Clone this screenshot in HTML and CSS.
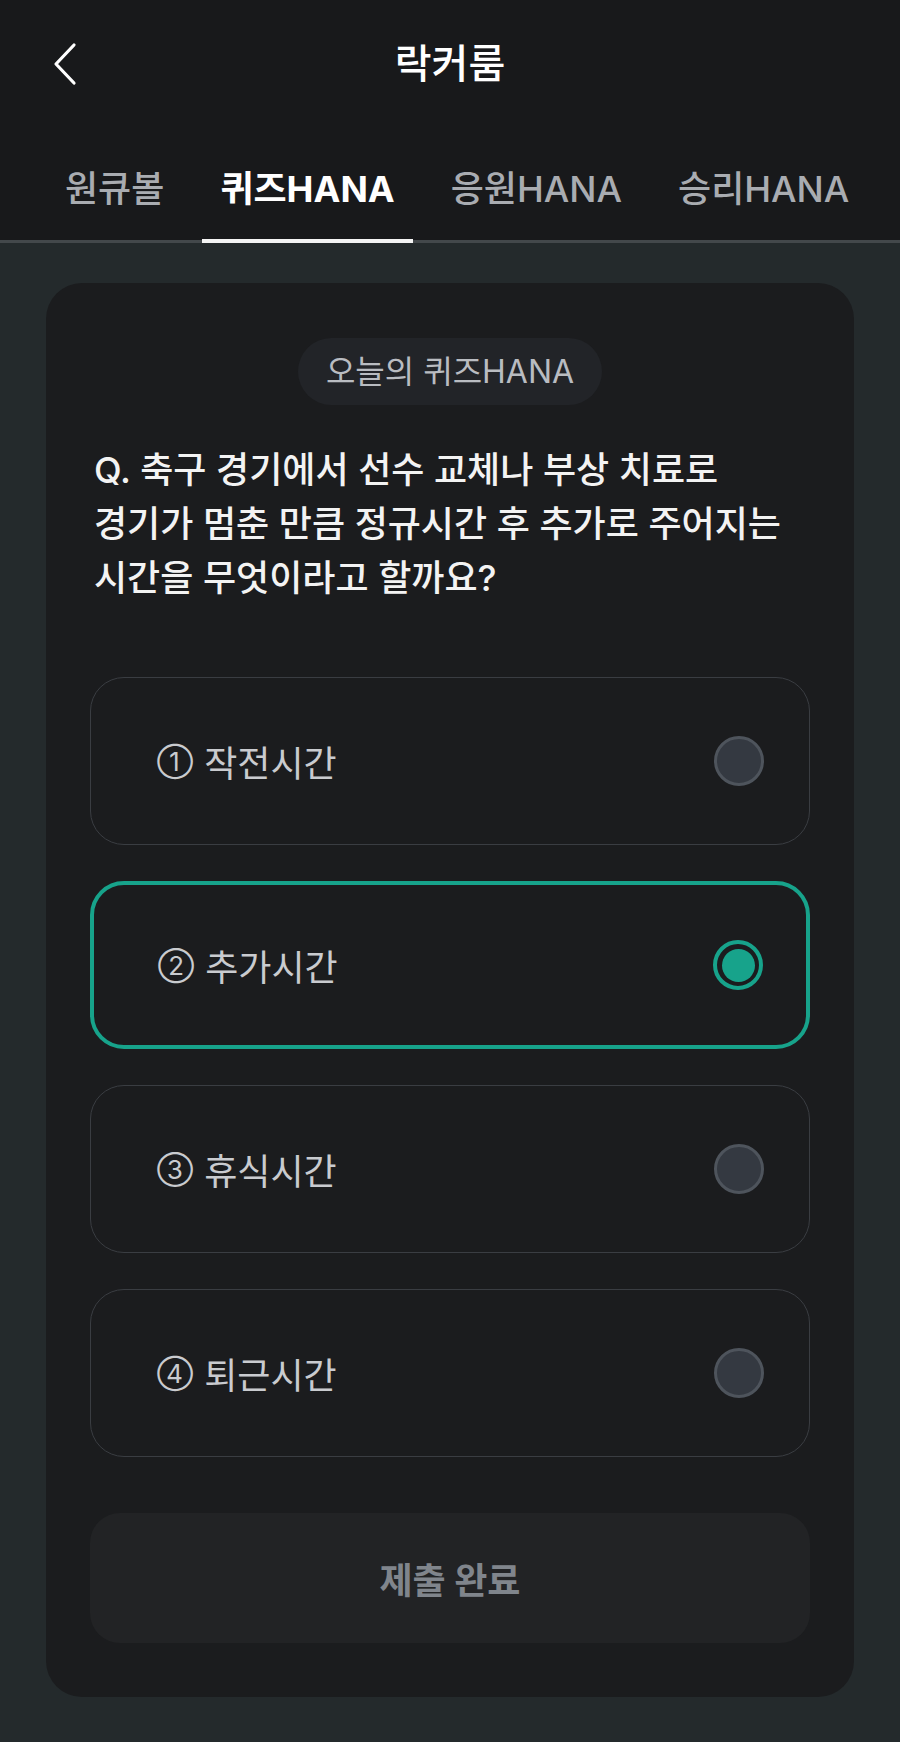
FILE: index.html
```html
<!DOCTYPE html>
<html lang="ko">
<head>
    <meta charset="UTF-8">
    <meta name="viewport" content="width=device-width, initial-scale=1.0">
    <title>락커룸 - 퀴즈HANA</title>
    <link rel="stylesheet" href="styles.css">
</head>
<body>
    <div class="header">
        <div class="topbar">
            <button class="back" aria-label="뒤로">
                <svg width="26" height="44" viewBox="0 0 26 44" fill="none">
                    <path d="M22 3 L4 22 L22 41" stroke="#fff" stroke-width="3.2" stroke-linecap="round" stroke-linejoin="round"/>
                </svg>
            </button>
            <h1>락커룸</h1>
        </div>
        <nav class="tabs">
            <a class="tab">원큐볼</a>
            <a class="tab active">퀴즈HANA</a>
            <a class="tab">응원HANA</a>
            <a class="tab">승리HANA</a>
        </nav>
    </div>
    <div class="main">
        <div class="card">
            <div class="badge">오늘의 퀴즈HANA</div>
            <p class="question">Q. 축구 경기에서 선수 교체나 부상 치료로<br>경기가 멈춘 만큼 정규시간 후 추가로 주어지는<br>시간을 무엇이라고 할까요?</p>
            <div class="options">
                <label class="option">
                    <span class="option-text"><span class="num">①</span>작전시간</span>
                    <span class="radio"></span>
                </label>
                <label class="option selected">
                    <span class="option-text"><span class="num">②</span>추가시간</span>
                    <span class="radio"></span>
                </label>
                <label class="option">
                    <span class="option-text"><span class="num">③</span>휴식시간</span>
                    <span class="radio"></span>
                </label>
                <label class="option">
                    <span class="option-text"><span class="num">④</span>퇴근시간</span>
                    <span class="radio"></span>
                </label>
            </div>
            <button class="submit" disabled>제출 완료</button>
        </div>
    </div>
</body>
</html>
```

FILE: styles.css
```css
body {
    margin: 0;
    min-height: 100vh;
    background: #242a2c;
    font-family: 'Inter', 'Noto Sans CJK KR', sans-serif;
    color: #fff;
}
.header {
    background: #18191b;
}
.topbar {
    height: 128px;
    display: flex;
    align-items: center;
    justify-content: center;
    position: relative;
}
.back {
    position: absolute;
    left: 52px;
    top: 42px;
    background: none;
    border: none;
    padding: 0;
    display: flex;
}
.topbar h1 {
    margin: 0;
    font-size: 40px;
    font-weight: 500;
    line-height: 48px;
}
.tabs {
    display: flex;
    gap: 20px;
    padding: 0 0 0 47px;
    border-bottom: 3px solid #43484b;
}
.tab {
    position: relative;
    padding: 38px 18px 28px 18px;
    font-size: 36px;
    line-height: 46px;
    font-weight: 500;
    color: #a9acb1;
    white-space: nowrap;
}
.tab.active {
    color: #fff;
    font-weight: 700;
}
.tab.active::after {
    content: '';
    position: absolute;
    left: 0;
    right: 0;
    bottom: -3px;
    height: 4px;
    background: #f4f4f4;
}
.main {
    padding: 40px 46px 45px 46px;
}
.card {
    background: #1b1c1e;
    border-radius: 36px;
    padding: 55px 44px 54px 44px;
    display: flex;
    flex-direction: column;
}
.badge {
    align-self: center;
    height: 67px;
    line-height: 67px;
    padding: 0 28px;
    border-radius: 34px;
    background: #222428;
    color: #b9bcc1;
    font-size: 32px;
}
.question {
    margin: 38px 0 0 0;
    padding-left: 4px;
    font-size: 36px;
    line-height: 54px;
    font-weight: 500;
    color: #f3f3f3;
}
.options {
    margin-top: 72px;
    display: flex;
    flex-direction: column;
    gap: 36px;
}
.option {
    height: 168px;
    box-sizing: border-box;
    border: 1.5px solid #3a3d42;
    border-radius: 34px;
    padding: 0 45px 0 66px;
    display: flex;
    align-items: center;
    justify-content: space-between;
}
.option.selected {
    border: 4px solid #17a38b;
    padding: 0 43px 0 64px;
}
.option-text {
    font-size: 36px;
    color: #c9cbcf;
    display: flex;
    align-items: center;
}
.num {
    font-size: 26px;
    margin-right: 11px;
}
.radio {
    width: 50px;
    height: 50px;
    box-sizing: border-box;
    border-radius: 50%;
    border: 3px solid #4e545c;
    background: #343941;
    display: flex;
    align-items: center;
    justify-content: center;
}
.selected .radio {
    border: 4px solid #17a38b;
    background: #1b1c1e;
}
.selected .radio::after {
    content: '';
    width: 33px;
    height: 33px;
    border-radius: 50%;
    background: #17a38b;
}
.submit {
    margin-top: 56px;
    height: 130px;
    border: none;
    border-radius: 30px;
    background: #222325;
    color: #80858c;
    font-family: inherit;
    font-size: 36px;
    font-weight: 700;
}
```
